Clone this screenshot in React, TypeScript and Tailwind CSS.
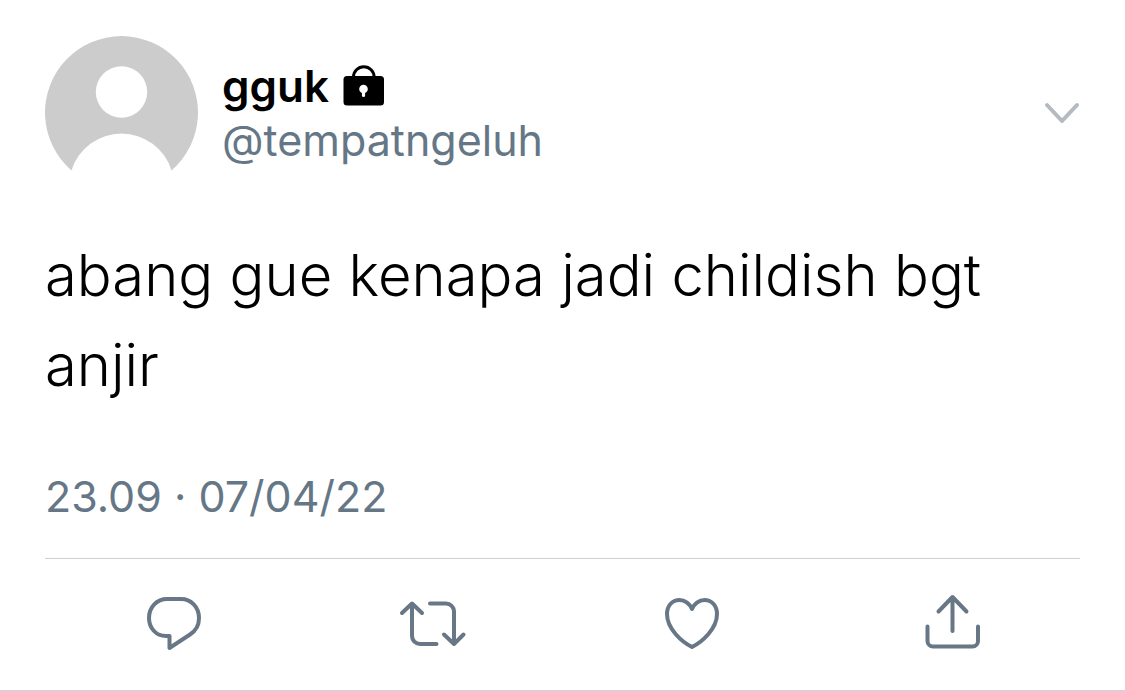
import type { ReactNode } from 'react';

interface ActionProps {
  label: string;
  viewBox: string;
  children: ReactNode;
}

function Action({ label, viewBox, children }: ActionProps) {
  return (
    <button type="button" aria-label={label} className="flex justify-center text-[#687786]">
      <svg
        viewBox={viewBox}
        className="size-[72px]"
        fill="none"
        stroke="currentColor"
        strokeWidth="4"
        strokeLinecap="round"
        strokeLinejoin="round"
      >
        {children}
      </svg>
    </button>
  );
}

function Avatar() {
  return (
    <svg viewBox="0 0 153 135" className="h-[135px] w-[153px] shrink-0" aria-hidden="true">
      <path
        fill="#ccc"
        fillRule="evenodd"
        d="M26.5 134.5A76.5 76.5 0 1 1 126.5 134.5A52.3 52.3 0 0 0 26.5 134.5ZM76.5 30.3a25.7 25.7 0 1 0 0 51.4a25.7 25.7 0 1 0 0-51.4Z"
      />
    </svg>
  );
}

function Lock() {
  return (
    <svg viewBox="0 0 42 42" className="size-[42px]" aria-hidden="true">
      <path d="M10.5 13v-1a10.3 10.3 0 0 1 20.6 0v1" fill="none" stroke="#000" strokeWidth="3" />
      <rect x="0.5" y="11" width="40.5" height="29.5" rx="3.5" />
      <circle cx="20.5" cy="24" r="4.3" fill="#fff" />
      <path d="M20.5 25v5.5" fill="none" stroke="#fff" strokeWidth="3.2" strokeLinecap="round" />
    </svg>
  );
}

export default function App() {
  return (
    <article className="border-b border-[#ccd6dd] bg-white px-[45px] pt-9 font-['Inter',sans-serif] text-black">
      <header className="flex items-start">
        <Avatar />
        <div className="ml-6 pt-[23px]">
          <div className="flex items-center gap-[14px]">
            <h1 className="text-[44px] leading-[54px] font-semibold">gguk</h1>
            <Lock />
          </div>
          <a href="#profile" className="block text-[43px] leading-[54px] text-[#657786]">
            @tempatngeluh
          </a>
        </div>
        <button type="button" aria-label="More" className="mt-[60px] ml-auto text-[#b3bac1]">
          <svg
            viewBox="0 0 36 32"
            className="h-8 w-9"
            fill="none"
            stroke="currentColor"
            strokeWidth="4"
            strokeLinecap="round"
            strokeLinejoin="round"
          >
            <path d="M3 9l15 16L33 9" />
          </svg>
        </button>
      </header>

      <p className="mt-[59px] text-[58px] leading-[90px] font-light">abang gue kenapa jadi childish bgt anjir</p>

      <time className="mt-[59px] block text-[43px] leading-[54px] text-[#657786]">23.09 · 07/04/22</time>

      <div className="mt-[35px] grid grid-cols-4 border-t border-[#cbd0d4] pt-[29px] pb-[30px]">
        <Action label="Reply" viewBox="8 8 72 72">
          <path d="M39.5 56H36C26 56 19 48 19 38C19 27 27 19 37 19H51C61 19 69 27 69 38C69 45 65.5 51 60 54.5L39.5 68Z" />
        </Action>
        <Action label="Retweet" viewBox="7 8 72 72">
          <path d="M12 33l10-9.5L32 33M22 24v32a8 8 0 0 0 8 8h16.5M40 23.5h16a8 8 0 0 1 8 8V64M54 54.5l10 9.5l9.5-9.5" />
        </Action>
        <Action label="Like" viewBox="6 8 72 72">
          <path d="M42 29C40 24 35 20 29.5 20C22 20 17 26 17 34C17 49 32 62 42 67C52 62 67 49 67 34C67 26 62 20 54.5 20C49 20 44 24 42 29Z" />
        </Action>
        <Action label="Share" viewBox="5 8 72 72">
          <path d="M28.5 31.5l14-14.5l14 14.5M42.5 18v33M17.500 46.500V61a5.500 5.500 0 0 0 5.500 5.500h39.500a5.500 5.500 0 0 0 5.500-5.500V46.500" />
        </Action>
      </div>
    </article>
  );
}
